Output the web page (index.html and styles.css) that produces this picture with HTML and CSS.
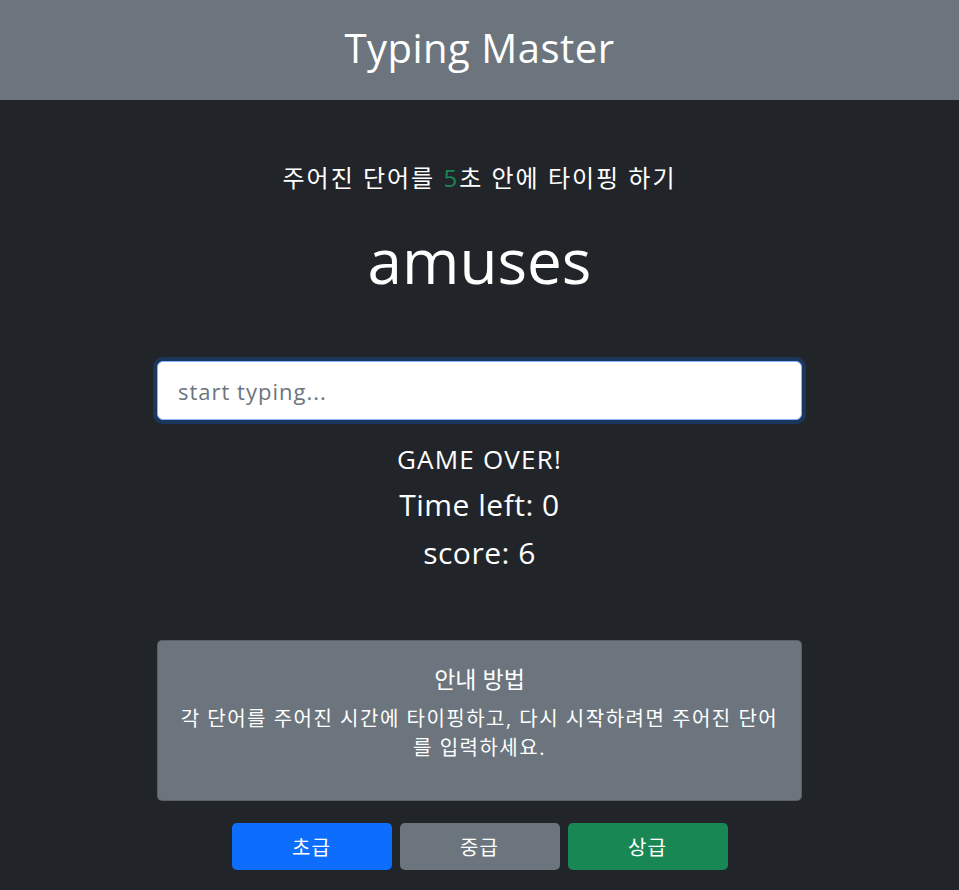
FILE: index.html
```html
<!DOCTYPE html>
<html lang="ko">
<head>
<meta charset="utf-8">
<title>Typing Master</title>
<link rel="stylesheet" href="styles.css">
</head>
<body>
<header class="header">
  <h1 class="title">Typing Master</h1>
</header>
<main class="main">
  <p class="lead">주어진 단어를 <span class="sec">5</span>초 안에 타이핑 하기</p>
  <h2 class="word">amuses</h2>
  <input class="typing" type="text" placeholder="start typing...">
  <div class="status">
    <p class="over">GAME OVER!</p>
    <p class="stat">Time left: 0</p>
    <p class="stat">score: 6</p>
  </div>
  <section class="card">
    <h3 class="card-title">안내 방법</h3>
    <p class="card-text">각 단어를 주어진 시간에 타이핑하고, 다시 시작하려면 주어진 단어를 입력하세요.</p>
  </section>
  <div class="levels">
    <button class="btn blue">초급</button>
    <button class="btn gray">중급</button>
    <button class="btn green">상급</button>
  </div>
</main>
</body>
</html>
```

FILE: styles.css
```css
* { box-sizing: border-box; }
html, body { margin: 0; padding: 0; }
body {
  background: #212529;
  color: #fff;
  font-family: "Open Sans", "Noto Sans CJK KR", sans-serif;
  height: 890px;
  overflow: hidden;
}
.header {
  background: #6c757d;
  height: 100px;
  display: flex;
  align-items: center;
  justify-content: center;
  padding-bottom: 6px;
}
.title {
  margin: 0;
  font-size: 40px;
  font-weight: 400;
  letter-spacing: 0.5px;
}
.main {
  display: flex;
  flex-direction: column;
  align-items: center;
}
.lead {
  margin: 62px 0 0;
  font-size: 24px;
  line-height: 32px;
  letter-spacing: 2px;
}
.sec { color: #198754; }
.word {
  margin: 26px 0 0;
  font-size: 62px;
  font-weight: 400;
  line-height: 80px;
}
.typing {
  margin-top: 61px;
  width: 645px;
  height: 59px;
  border: 1px solid #86b7fe;
  border-radius: 6px;
  box-shadow: 0 0 0 4px rgba(13,110,253,.25);
  padding: 0 20px;
  font-family: "Open Sans", sans-serif;
  font-size: 22px;
  letter-spacing: 1px;
  color: #212529;
  outline: none;
}
.typing::placeholder { color: #6c757d; }
.status {
  margin-top: 21px;
  display: flex;
  flex-direction: column;
  align-items: center;
}
.over {
  margin: 0;
  font-size: 26px;
  line-height: 36px;
  letter-spacing: 1.2px;
}
.stat {
  margin: 8px 0 0;
  font-size: 30px;
  line-height: 40px;
  letter-spacing: 0.5px;
}
.card {
  margin-top: 67px;
  width: 645px;
  height: 161px;
  background: #6c757d;
  border: 1px solid rgba(0,0,0,.175);
  border-radius: 5px;
  padding: 21px 14px 0;
  text-align: center;
}
.card-title {
  margin: 0;
  font-size: 23px;
  font-weight: 400;
  line-height: 34px;
}
.card-text {
  margin: 8px 0 0;
  font-size: 20px;
  line-height: 29px;
  letter-spacing: 1.5px;
}
.levels {
  margin-top: 22px;
  display: flex;
  gap: 8px;
}
.btn {
  width: 160px;
  height: 47px;
  border: none;
  border-radius: 5px;
  color: #fff;
  font-family: "Noto Sans CJK KR", sans-serif;
  font-size: 20px;
  letter-spacing: 1px;
}
.blue { background: #0d6efd; }
.gray { background: #6c757d; }
.green { background: #198754; }
```
